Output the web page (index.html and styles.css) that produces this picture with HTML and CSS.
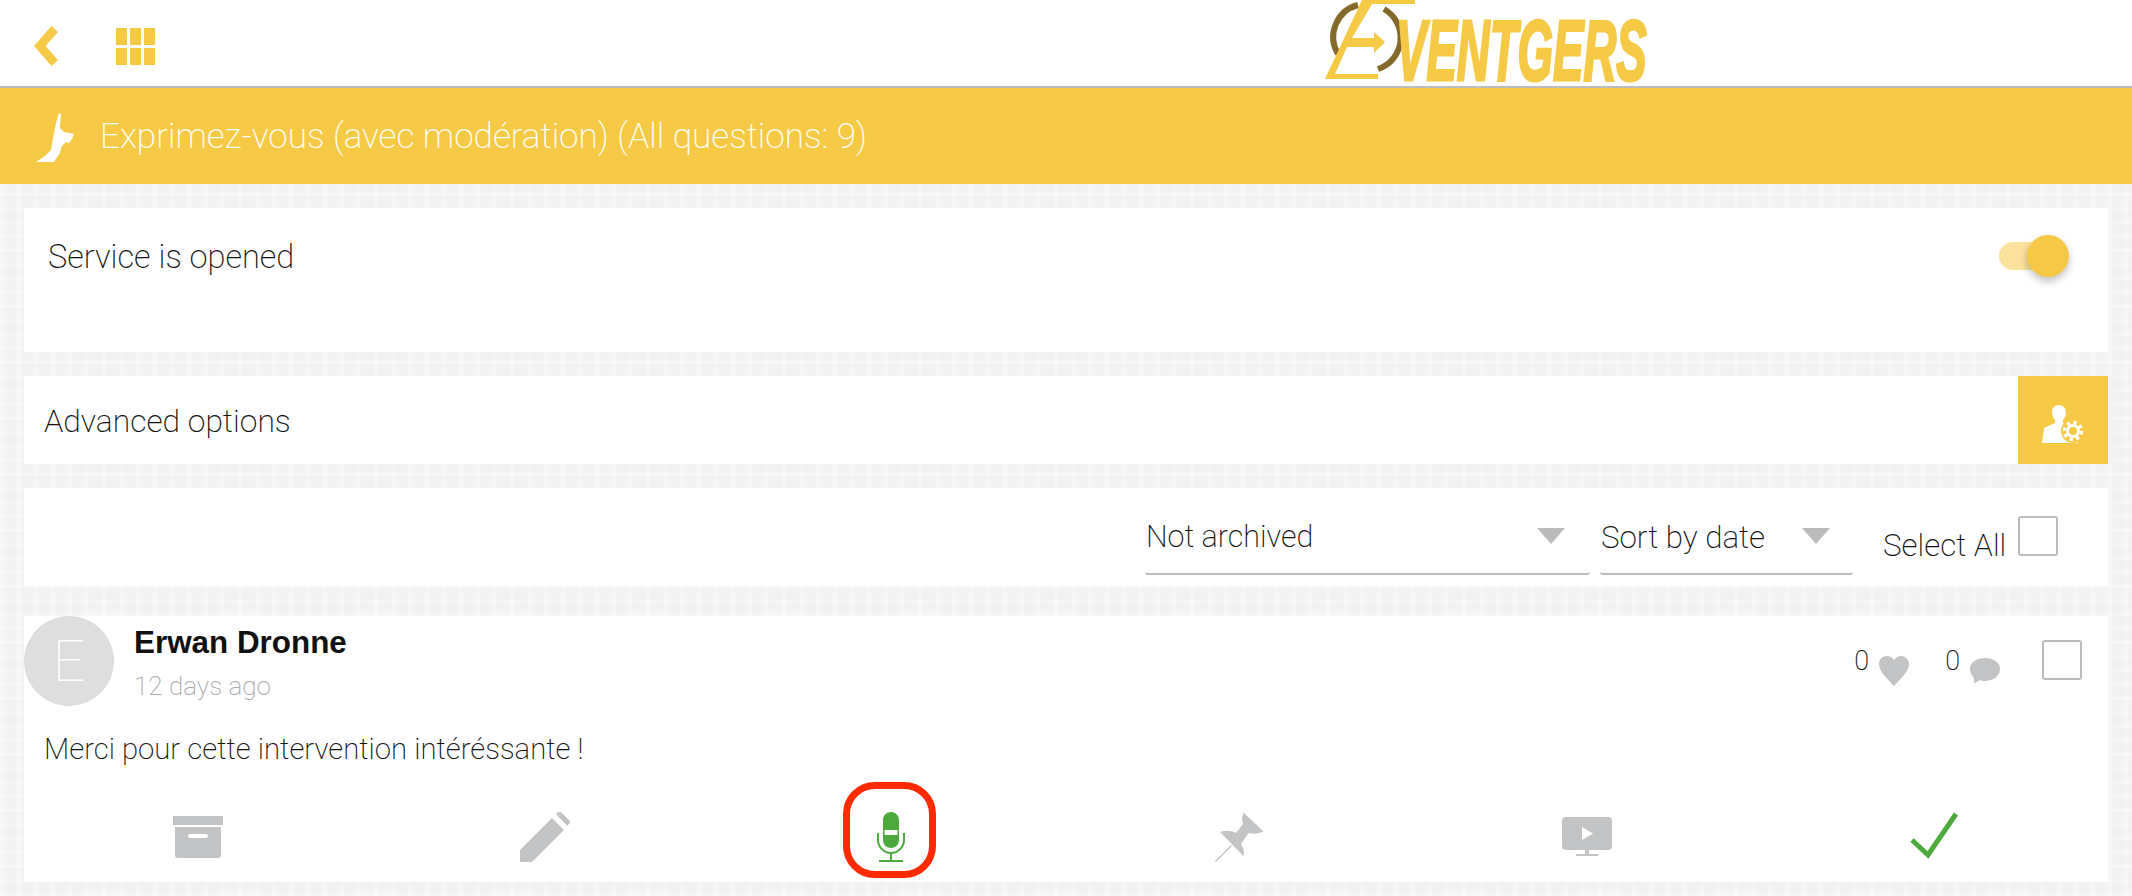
FILE: index.html
```html
<!DOCTYPE html>
<html lang="en">
<head>
  <meta charset="UTF-8">
  <title>Eventgers</title>
  <link rel="stylesheet" href="styles.css">
</head>
<body>

  <header class="topbar">
    <svg class="back-icon" width="24" height="40" viewBox="0 0 24 40"><path d="M24 6 L17.500 0 L0 20 L17.500 40 L24 34 L11.500 20 Z"/></svg>
    <div class="apps-icon"><i></i><i></i><i></i><i></i><i></i><i></i></div>
    <div class="logo">
      <svg class="logo-mark" width="96" height="86" viewBox="1320 0 96 86">
        <path class="logo-ring" d="M1358 5 A33 33 0 0 0 1338 54 M1384 9 A33 33 0 0 1 1378 69"/>
        <path class="logo-e" d="M1362 0 H1415 V4 H1372 L1352 38 H1374 V32 L1385 42 L1374 53 V47 H1347 L1335 74 H1378 V79 H1325 Z"/>
      </svg>
      <span class="logo-word">VENTGERS</span>
    </div>
  </header>

  <div class="titlebar">
    <svg class="hand-icon" width="40" height="50" viewBox="0 0 40 50"><path d="M24 0 L26 1 L25 15 L29 19 L35 20 L39 21 L37 26 L34 30 L31 29 L28 32 L26 35 L25 40 L19 49 L1 49 L10 43 L16 37 L18 25 L21 10 Z"/></svg>
    <span>Exprimez-vous (avec modération) (All questions: 9)</span>
  </div>

  <main class="content">
    <section class="panel service">
      <span>Service is opened</span>
      <div class="toggle"><div class="toggle-knob"></div></div>
    </section>

    <section class="panel advanced">
      <span>Advanced options</span>
      <div class="advanced-btn">
        <svg width="42" height="38" viewBox="0 0 42 38">
          <path class="white" d="M17 0 C21 0 24 3 24 7 C24 10 23 13 21 15 L21 18 L36 24 L36 38 L0 38 L2 23 L13 18 L13 15 C11 13 10 10 10 7 C10 3 13 0 17 0 Z"/>
          <circle class="gear-halo" cx="31" cy="26" r="12"/>
          <circle class="gear-teeth" cx="31" cy="26" r="8.500"/>
          <circle class="gear" cx="31" cy="26" r="5.500"/>
        </svg>
      </div>
    </section>

    <section class="panel filters">
      <div class="select select-archive"><span>Not archived</span><b class="arrow"></b></div>
      <div class="select select-sort"><span>Sort by date</span><b class="arrow"></b></div>
      <div class="select-all"><span>Select All</span><div class="checkbox"></div></div>
    </section>

    <section class="panel question">
      <div class="question-head">
        <div class="avatar">E</div>
        <div class="author">
          <div class="author-name">Erwan Dronne</div>
          <div class="author-date">12 days ago</div>
        </div>
        <div class="stats">
          <span class="stat-num">0</span>
          <svg class="heart" width="30" height="30" viewBox="0 0 30 30"><path d="M15 30 C10 24 0 16 0 8 C0 3 4 0 8 0 C11 0 14 2 15 4 C16 2 19 0 22 0 C26 0 30 3 30 8 C30 16 20 24 15 30 Z"/></svg>
          <span class="stat-num stat-comments">0</span>
          <svg class="bubble" width="30" height="26" viewBox="0 0 30 26"><path d="M15 0 C23 0 30 4 30 11 C30 18 23 23 15 23 C13 23 11 22.500 10 22 L4 25.500 L4 20 C2 18 0 15 0 11 C0 4 7 0 15 0 Z"/></svg>
          <div class="checkbox question-check"></div>
        </div>
      </div>
      <p class="question-text">Merci pour cette intervention intéréssante !</p>
      <div class="actions">
        <div class="action">
          <svg width="50" height="42" viewBox="0 0 50 42"><path d="M0 0 H50 V9 H0 Z M2 11 H48 V39 Q48 42 45 42 H5 Q2 42 2 39 Z M17 18 Q15 18 15 20 Q15 22 17 22 H33 Q35 22 35 20 Q35 18 33 18 Z" fill-rule="evenodd"/></svg>
        </div>
        <div class="action">
          <svg width="50" height="50" viewBox="0 0 50 50"><path d="M0 38 L32 6 L44 18 L12 50 H0 Z M36 2 L38 0 Q40 -1 42 1 L49 8 Q51 10 49 12 L47 14 Z"/></svg>
        </div>
        <div class="action">
          <div class="highlight">
            <svg class="mic" width="28" height="50" viewBox="0 0 28 50">
              <path class="mic-body" d="M14 0 C18 0 22 3 22 8 V28 C22 33 18 36 14 36 C10 36 6 33 6 28 V8 C6 3 10 0 14 0 Z M7.500 18 V23 H20.500 V18 Z" fill-rule="evenodd"/>
              <path class="mic-line" d="M1 21 V28 C1 35 7 41 14 41 C21 41 27 35 27 28 V21 M14 41 V49 M2 49 H26"/>
            </svg>
          </div>
        </div>
        <div class="action">
          <svg width="50" height="50" viewBox="0 0 50 50"><path d="M0 49 L16 33 L17 34 L1 50 Z M5 20 Q13 17 21 21 L28 12 Q26 6 28.500 0.500 L48.500 19.500 Q41 23 33.500 21 L26 32 Q30 38 28.500 44 Z"/></svg>
        </div>
        <div class="action">
          <svg width="50" height="40" viewBox="0 0 50 40"><path d="M4 0 H46 Q50 0 50 4 V29 Q50 33 46 33 H4 Q0 33 0 29 V4 Q0 0 4 0 Z M20 10 V23 L31 16.500 Z" fill-rule="evenodd"/><path d="M23 33 H27 V37 H36 V39 H14 V37 H23 Z"/></svg>
        </div>
        <div class="action">
          <svg class="check-icon" width="48" height="50" viewBox="0 0 48 50"><path d="M2 28 L18 43 L46 2"/></svg>
        </div>
      </div>
    </section>
  </main>

</body>
</html>
```

FILE: styles.css
```css
body {
  margin: 0;
  height: 896px;
  overflow: hidden;
  font-family: Roboto, "Liberation Sans", sans-serif;
  font-weight: 200;
  color: #111;
  background-color: #f2f2f2;
  background-image:
    repeating-linear-gradient(90deg, rgba(255,255,255,0.25) 0 4px, transparent 4px 17px),
    repeating-linear-gradient(0deg, rgba(255,255,255,0.25) 0 3px, transparent 3px 14px);
}
svg {
  display: block;
  fill: #c2c3c5;
}
.topbar {
  display: flex;
  align-items: center;
  height: 86px;
  padding-left: 34px;
  background: #fff;
  border-bottom: 2px solid #bbb;
}
.back-icon {
  flex: none;
  fill: #f6c945;
  margin-top: 6px;
}
.apps-icon {
  display: grid;
  grid-template-columns: repeat(3, 11px);
  grid-template-rows: repeat(2, 17px);
  gap: 3px;
  margin: 6px 0 0 58px;
}
.apps-icon i {
  background: #f6c945;
}
.logo {
  display: flex;
  align-self: flex-start;
  height: 86px;
  width: 340px;
  margin-left: auto;
  margin-right: 472px;
}
.logo-mark {
  flex: none;
}
.logo-ring {
  fill: none;
  stroke: #85692a;
  stroke-width: 6;
}
.logo-e {
  fill: #f6c945;
}
.logo-word {
  flex: none;
  width: 252px;
  margin-left: -20px;
  font-family: "Liberation Sans Narrow", "Liberation Sans", sans-serif;
  font-size: 86px;
  font-weight: 700;
  font-style: italic;
  line-height: 100px;
  white-space: nowrap;
  color: #f6c945;
  -webkit-text-stroke: 3px #f6c945;
  transform: scaleX(0.53);
  transform-origin: 0 0;
}
.titlebar {
  display: flex;
  align-items: center;
  height: 96px;
  padding-left: 35px;
  background: #f6c945;
  color: #fff;
  font-size: 35.100px;
}
.hand-icon {
  flex: none;
  fill: #fff;
  margin: 4px 25px 0 0;
}
.content {
  display: flex;
  flex-direction: column;
  padding: 24px 24px 0;
}
.panel {
  background: #fff;
  font-size: 30.500px;
}
.service {
  display: flex;
  justify-content: space-between;
  height: 144px;
  padding: 30px 47px 0 24px;
  box-sizing: border-box;
  font-size: 32.500px;
}
.toggle {
  position: relative;
  width: 62px;
  height: 28px;
  margin-top: 4px;
  border-radius: 14px;
  background: #fae29c;
}
.toggle-knob {
  position: absolute;
  top: -7px;
  right: -8px;
  width: 42px;
  height: 42px;
  border-radius: 50%;
  background: #f6c945;
  box-shadow: 0 4px 8px rgba(0,0,0,0.25);
}
.advanced {
  display: flex;
  justify-content: space-between;
  align-items: center;
  height: 88px;
  margin-top: 24px;
  padding-left: 20px;
  font-size: 31.800px;
}
.advanced span {
  margin-top: 2px;
}
.advanced-btn {
  display: flex;
  align-items: center;
  justify-content: center;
  align-self: stretch;
  width: 90px;
  padding-top: 8px;
  box-sizing: border-box;
  background: #f6c945;
}
.white {
  fill: #fff;
}
.gear-halo {
  fill: #f6c945;
}
.gear-teeth {
  fill: none;
  stroke: #fff;
  stroke-width: 3.500;
  stroke-dasharray: 3.400 3.280;
}
.gear {
  fill: #f6c945;
  stroke: #fff;
  stroke-width: 3;
}
.filters {
  display: flex;
  height: 98px;
  margin-top: 24px;
  box-sizing: border-box;
  padding-left: 1121px;
}
.select {
  display: flex;
  justify-content: space-between;
  height: 87px;
  padding: 31px 25px 0 1px;
  box-sizing: border-box;
  border-bottom: 2px solid #bbb;
  border-radius: 0 0 3px 3px;
}
.select-archive {
  width: 445px;
}
.select-sort {
  width: 253px;
  margin-left: 10px;
  padding-right: 23px;
  font-size: 31.300px;
}
.arrow {
  width: 0;
  height: 0;
  margin-top: 9px;
  border-left: 14px solid transparent;
  border-right: 14px solid transparent;
  border-top: 16px solid #bbb;
}
.select-all {
  display: flex;
  margin-left: 30px;
  font-size: 31.400px;
}
.select-all span {
  margin-top: 39px;
}
.checkbox {
  width: 40px;
  height: 40px;
  box-sizing: border-box;
  border: 2px solid #bbb;
  border-radius: 3px;
}
.select-all .checkbox {
  margin: 28px 0 0 12px;
}
.question {
  height: 266px;
  margin-top: 30px;
  display: flex;
  flex-direction: column;
}
.question-head {
  display: flex;
}
.avatar {
  display: flex;
  align-items: center;
  justify-content: center;
  width: 90px;
  height: 90px;
  border-radius: 50%;
  background: #ddd;
  color: #fff;
  font-size: 58px;
  font-weight: 100;
}
.author {
  margin-left: 20px;
}
.author-name {
  font-family: "Liberation Sans", sans-serif;
  font-size: 31.400px;
  font-weight: 700;
  color: #111;
  line-height: 54px;
}
.author-date {
  font-size: 26px;
  color: #aaa;
  margin-top: 1px;
}
.stats {
  display: flex;
  align-items: flex-start;
  margin-left: auto;
}
.stat-num {
  font-size: 27px;
  margin-top: 29px;
}
.heart {
  margin: 40px 0 0 10px;
}
.stat-comments {
  margin-left: 36px;
}
.bubble {
  margin: 42px 0 0 10px;
}
.question-check {
  margin: 24px 26px 0 42px;
}
.question-text {
  margin: 26px 0 0 20px;
  font-size: 29.300px;
}
.actions {
  display: flex;
  margin-top: auto;
  margin-bottom: 4px;
}
.action {
  flex: 1;
  display: flex;
  align-items: center;
  justify-content: center;
  height: 96px;
}
.action svg {
  margin-top: 14px;
}
.highlight {
  display: flex;
  align-items: center;
  justify-content: center;
  width: 93px;
  height: 96px;
  margin-right: 5px;
  padding-left: 2px;
  box-sizing: border-box;
  border: 7px solid #ff2a00;
  border-radius: 32px;
}
.mic-body {
  fill: #4caa3c;
}
.mic-line {
  fill: none;
  stroke: #4caa3c;
  stroke-width: 2;
}
.check-icon {
  fill: none;
  stroke: #4caa3c;
  stroke-width: 5;
}
```
